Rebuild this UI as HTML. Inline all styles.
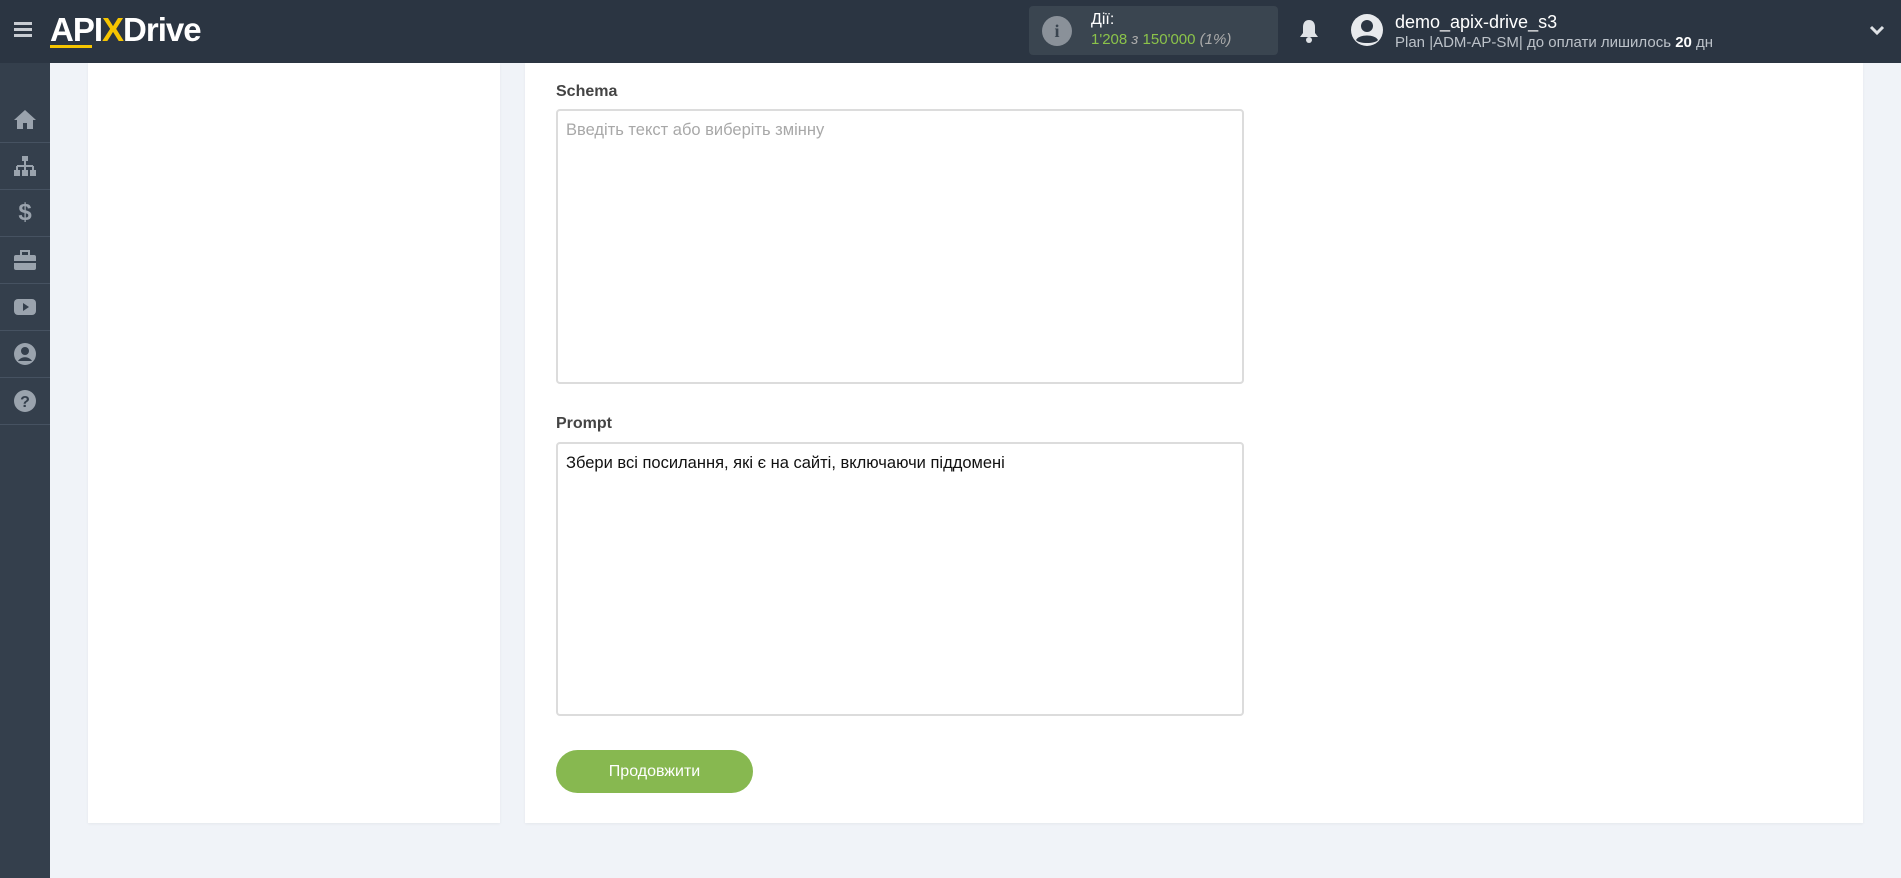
<!DOCTYPE html>
<html><head><meta charset="utf-8"><style>
*{box-sizing:border-box;margin:0;padding:0}
body{width:1901px;height:878px;overflow:hidden;background:#f0f3f8;font-family:"Liberation Sans",Arial,sans-serif;position:relative}
.hdr{position:absolute;left:0;top:0;width:1901px;height:63px;background:#2b3542}
.side{position:absolute;left:0;top:63px;width:50px;height:815px;background:#343f4c}
.side .it{height:47px;border-bottom:1px solid #465261;display:flex;align-items:center;justify-content:center}
.card{position:absolute;background:#fff;box-shadow:0 1px 3px rgba(0,0,0,.05)}
.lbl{position:absolute;font-size:16px;font-weight:bold;color:#444}
.ta{position:absolute;border:2px solid #dcdcdc;border-radius:4px;background:#fff;font-size:16.5px;padding:10px 8px}
</style></head><body>
<div class="hdr">
 <div style="position:absolute;left:14px;top:22px;width:18px;height:3px;background:#c8ccd2;box-shadow:0 6px 0 #c8ccd2,0 12px 0 #c8ccd2"></div>
 <div style="position:absolute;left:50px;top:11px;font-size:33px;font-weight:bold;color:#fff;letter-spacing:-1px">API<span style="color:#f6c500">X</span>Drive</div>
 <div style="position:absolute;left:50px;top:45px;width:42px;height:3px;background:#f6c500"></div>
 <div style="position:absolute;left:1029px;top:6px;width:249px;height:49px;background:#3a4550;border-radius:4px">
  <div style="position:absolute;left:13px;top:10px;width:30px;height:30px;border-radius:50%;background:#8a9199;color:#3a4550;font-weight:bold;font-size:18px;text-align:center;line-height:30px;font-family:'Liberation Serif',serif">i</div>
  <div style="position:absolute;left:62px;top:5px;color:#fff;font-size:16px">Дії:</div>
  <div style="position:absolute;left:62px;top:25px;color:#8bc34a;font-size:15px">1'208 <span style="color:#aaa;font-style:italic">з</span> 150'000 <span style="color:#aaa;font-style:italic">(1%)</span></div>
 </div>
 <svg style="position:absolute;left:1298px;top:18px" width="22" height="26" viewBox="0 0 22 26"><path d="M11 2c-4 0-6 3-6 7v6l-3 4h18l-3-4V9c0-4-2-7-6-7z" fill="#dfe2e6"/><circle cx="11" cy="22" r="3" fill="#dfe2e6"/></svg>
 <svg style="position:absolute;left:1351px;top:14px" width="32" height="32" viewBox="0 0 32 32"><circle cx="16" cy="16" r="16" fill="#e8eaed"/><circle cx="16" cy="12" r="6" fill="#2b3542"/><path d="M5 26c3-6 19-6 22 0c-3 4-19 4-22 0z" fill="#2b3542"/></svg>
 <div style="position:absolute;left:1395px;top:12px;color:#fff;font-size:18px">demo_apix-drive_s3</div>
 <div style="position:absolute;left:1395px;top:34px;color:#bcc2c9;font-size:15px">Plan |ADM-AP-SM| до оплати лишилось <b style="color:#fff">20</b> дн</div>
 <svg style="position:absolute;left:1869px;top:25px" width="16" height="12" viewBox="0 0 16 12"><path d="M2 2l6 6 6-6" stroke="#dfe2e6" stroke-width="3" fill="none"/></svg>
</div>
<div class="side"><div style="height:33px"></div>
 <div class="it"><svg width="24" height="22" viewBox="0 0 24 22"><path d="M12 2L1 12h3v9h6v-6h4v6h6v-9h3z" fill="#9aa3ad"/></svg></div>
 <div class="it"><svg width="24" height="22" viewBox="0 0 24 22"><rect x="9" y="1" width="6" height="5" fill="#9aa3ad"/><path d="M12 6v5M4 11h16M4 11v4M12 11v4M20 11v4" stroke="#9aa3ad" stroke-width="2" fill="none"/><rect x="1" y="15" width="6" height="6" fill="#9aa3ad"/><rect x="9" y="15" width="6" height="6" fill="#9aa3ad"/><rect x="17" y="15" width="6" height="6" fill="#9aa3ad"/></svg></div>
 <div class="it"><span style="color:#9aa3ad;font-size:24px;font-weight:bold">$</span></div>
 <div class="it"><svg width="24" height="22" viewBox="0 0 24 22"><rect x="8" y="2" width="8" height="5" fill="none" stroke="#9aa3ad" stroke-width="2"/><rect x="1" y="6" width="22" height="15" rx="2" fill="#9aa3ad"/><rect x="1" y="12" width="22" height="2" fill="#343f4c"/></svg></div>
 <div class="it"><svg width="24" height="20" viewBox="0 0 24 20"><rect x="1" y="2" width="22" height="16" rx="4" fill="#9aa3ad"/><path d="M10 6l6 4-6 4z" fill="#343f4c"/></svg></div>
 <div class="it"><svg width="24" height="24" viewBox="0 0 24 24"><circle cx="12" cy="12" r="11" fill="#9aa3ad"/><circle cx="12" cy="9" r="4" fill="#343f4c"/><path d="M5 19c3-5 11-5 14 0" fill="#343f4c"/></svg></div>
 <div class="it"><svg width="24" height="24" viewBox="0 0 24 24"><circle cx="12" cy="12" r="11" fill="#9aa3ad"/><text x="12" y="18" text-anchor="middle" font-size="16" font-weight="bold" fill="#343f4c" font-family="Liberation Sans">?</text></svg></div>
</div>
<div class="card" style="left:88px;top:63px;width:412px;height:760px"></div>
<div class="card" style="left:525px;top:63px;width:1338px;height:760px"></div>
<div class="lbl" style="left:556px;top:83px">Schema</div>
<div class="ta" style="left:556px;top:109px;width:688px;height:275px;color:#a8a8a8">Введіть текст або виберіть змінну</div>
<div class="lbl" style="left:556px;top:415px">Prompt</div>
<div class="ta" style="left:556px;top:442px;width:688px;height:274px;color:#111">Збери всі посилання, які є на сайті, включаючи піддомені</div>
<div style="position:absolute;left:556px;top:750px;width:197px;height:43px;border-radius:22px;background:#87b850;color:#fff;font-size:16px;text-align:center;line-height:43px">Продовжити</div>
</body></html>
